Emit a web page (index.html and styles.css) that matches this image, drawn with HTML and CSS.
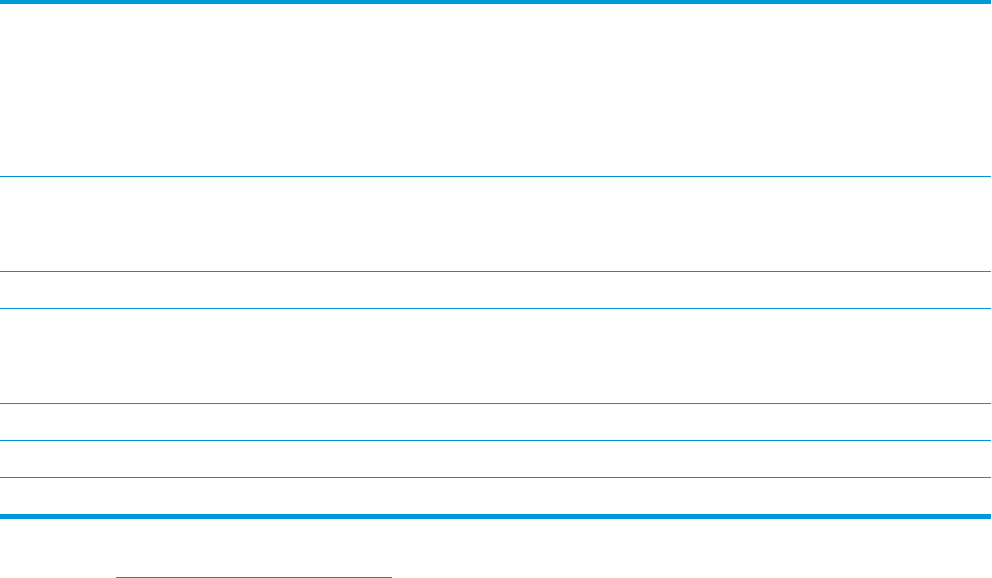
FILE: index.html
```html
<!DOCTYPE html>
<html>
<head>
<meta charset="utf-8">
<link rel="stylesheet" href="styles.css">
</head>
<body>
<div class="table">
  <div class="row r172"><div class="cell c1"></div><div class="cell c2"></div></div>
  <div class="row r94"><div class="cell c1"></div><div class="cell c2"></div></div>
  <div class="row r36"><div class="cell c1"></div><div class="cell c2"></div></div>
  <div class="row r94"><div class="cell c1"></div><div class="cell c2"></div></div>
  <div class="row r36"><div class="cell c1"></div><div class="cell c2"></div></div>
  <div class="row r36"><div class="cell c1"></div><div class="cell c2"></div></div>
  <div class="row r36 last"><div class="cell c1"></div><div class="cell c2"></div></div>
</div>
<div class="footnote-rule"></div>
</body>
</html>
```
FILE: styles.css
```css
html, body {
  margin: 0;
  padding: 0;
  background: #ffffff;
  font-family: "Liberation Sans", Arial, sans-serif;
}
.table {
  width: 991px;
  border-top: 4px solid #0099d8;
  border-bottom: 5px solid #0099d8;
}
.row {
  display: grid;
  grid-template-columns: 330px 661px;
  border-bottom: 1px solid #0096d6;
}
.row.last {
  border-bottom: none;
}
.r172 { height: 172px; }
.r94 { height: 94px; }
.r36 { height: 36px; }
.footnote-rule {
  margin-top: 58px;
  margin-left: 116px;
  width: 276px;
  border-top: 1px solid #0096d6;
}
```
